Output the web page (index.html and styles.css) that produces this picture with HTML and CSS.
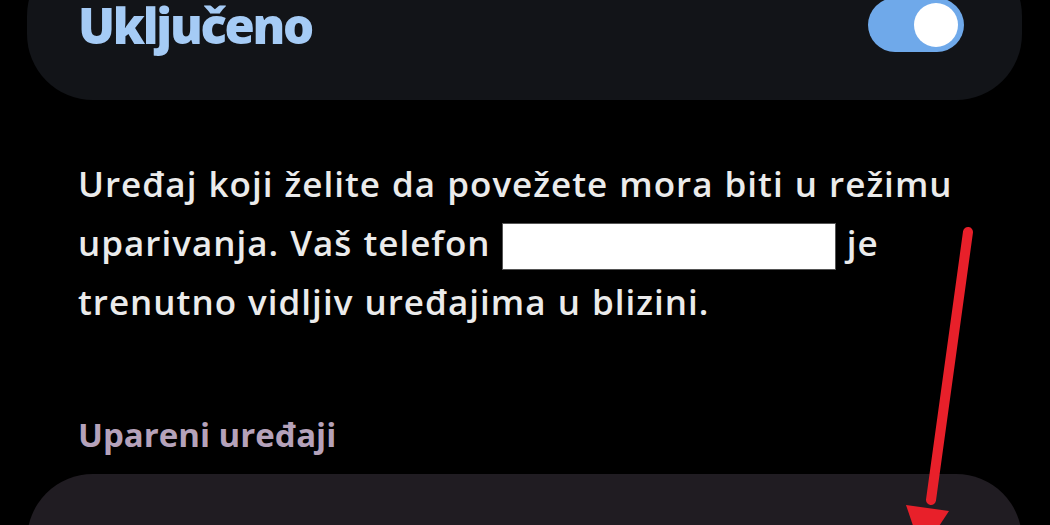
FILE: index.html
```html
<!DOCTYPE html>
<html lang="sr">
<head>
    <meta charset="UTF-8">
    <meta name="viewport" content="width=device-width, initial-scale=1.0">
    <link rel="stylesheet" href="styles.css">
    <title>Bluetooth</title>
</head>
<body>
    <div class="screen">
        <div class="master-card">
            <span class="master-title">Uključeno</span>
            <div class="switch">
                <div class="switch-thumb"></div>
            </div>
        </div>

        <p class="info">Uređaj koji želite da povežete mora biti u režimu uparivanja. Vaš telefon <span class="redacted"></span> je trenutno vidljiv uređajima u blizini.</p>

        <h2 class="section-title">Upareni uređaji</h2>

        <div class="device-card"></div>

        <!-- annotation arrow -->
        <svg class="arrow" width="1050" height="525" viewBox="0 0 1050 525">
            <line x1="968" y1="232" x2="931" y2="500" stroke="#e8202a" stroke-width="10" stroke-linecap="round"/>
            <polygon points="906,505 949,511 922,552" fill="#e8202a"/>
        </svg>
    </div>
</body>
</html>
```

FILE: styles.css
```css
body {
    margin: 0;
    background-color: #000;
    font-family: "Open Sans", "Noto Sans", sans-serif;
    overflow: hidden;
}

.screen {
    position: relative;
    width: 1050px;
    height: 525px;
    overflow: hidden;
}

.master-card {
    margin: -50px 28px 0 27px;
    height: 150px;
    background-color: #121418;
    border-radius: 66px;
    display: flex;
    align-items: center;
    justify-content: space-between;
    padding: 0 58px 0 51px;
    box-sizing: border-box;
}

.master-title {
    color: #a5cbf5;
    font-size: 49px;
    font-weight: 800;
    letter-spacing: -2.3px;
    line-height: 50px;
}

.switch {
    width: 96px;
    height: 54px;
    border-radius: 27px;
    background-color: #6fa9ea;
    display: flex;
    align-items: center;
    justify-content: flex-end;
    padding-right: 6px;
    box-sizing: border-box;
}

.switch-thumb {
    width: 44px;
    height: 44px;
    border-radius: 50%;
    background-color: #fff;
}

.info {
    margin: 54px 0 0 78px;
    width: 900px;
    color: #ebebeb;
    font-size: 35px;
    font-weight: 600;
    letter-spacing: 1px;
    word-spacing: 1px;
    line-height: 59px;
}

.redacted {
    display: inline-block;
    width: 334px;
    height: 47px;
    background-color: #fff;
    border: 1px solid #555;
    box-sizing: border-box;
    vertical-align: -14px;
}

.section-title {
    margin: 84px 0 0 78px;
    color: #b5a2ba;
    font-size: 33px;
    font-weight: 700;
    line-height: 40px;
}

.device-card {
    margin: 19px 28px 0 27px;
    height: 200px;
    background-color: #201c22;
    border-radius: 66px;
}

.arrow {
    position: absolute;
    left: 0;
    top: 0;
}
```
